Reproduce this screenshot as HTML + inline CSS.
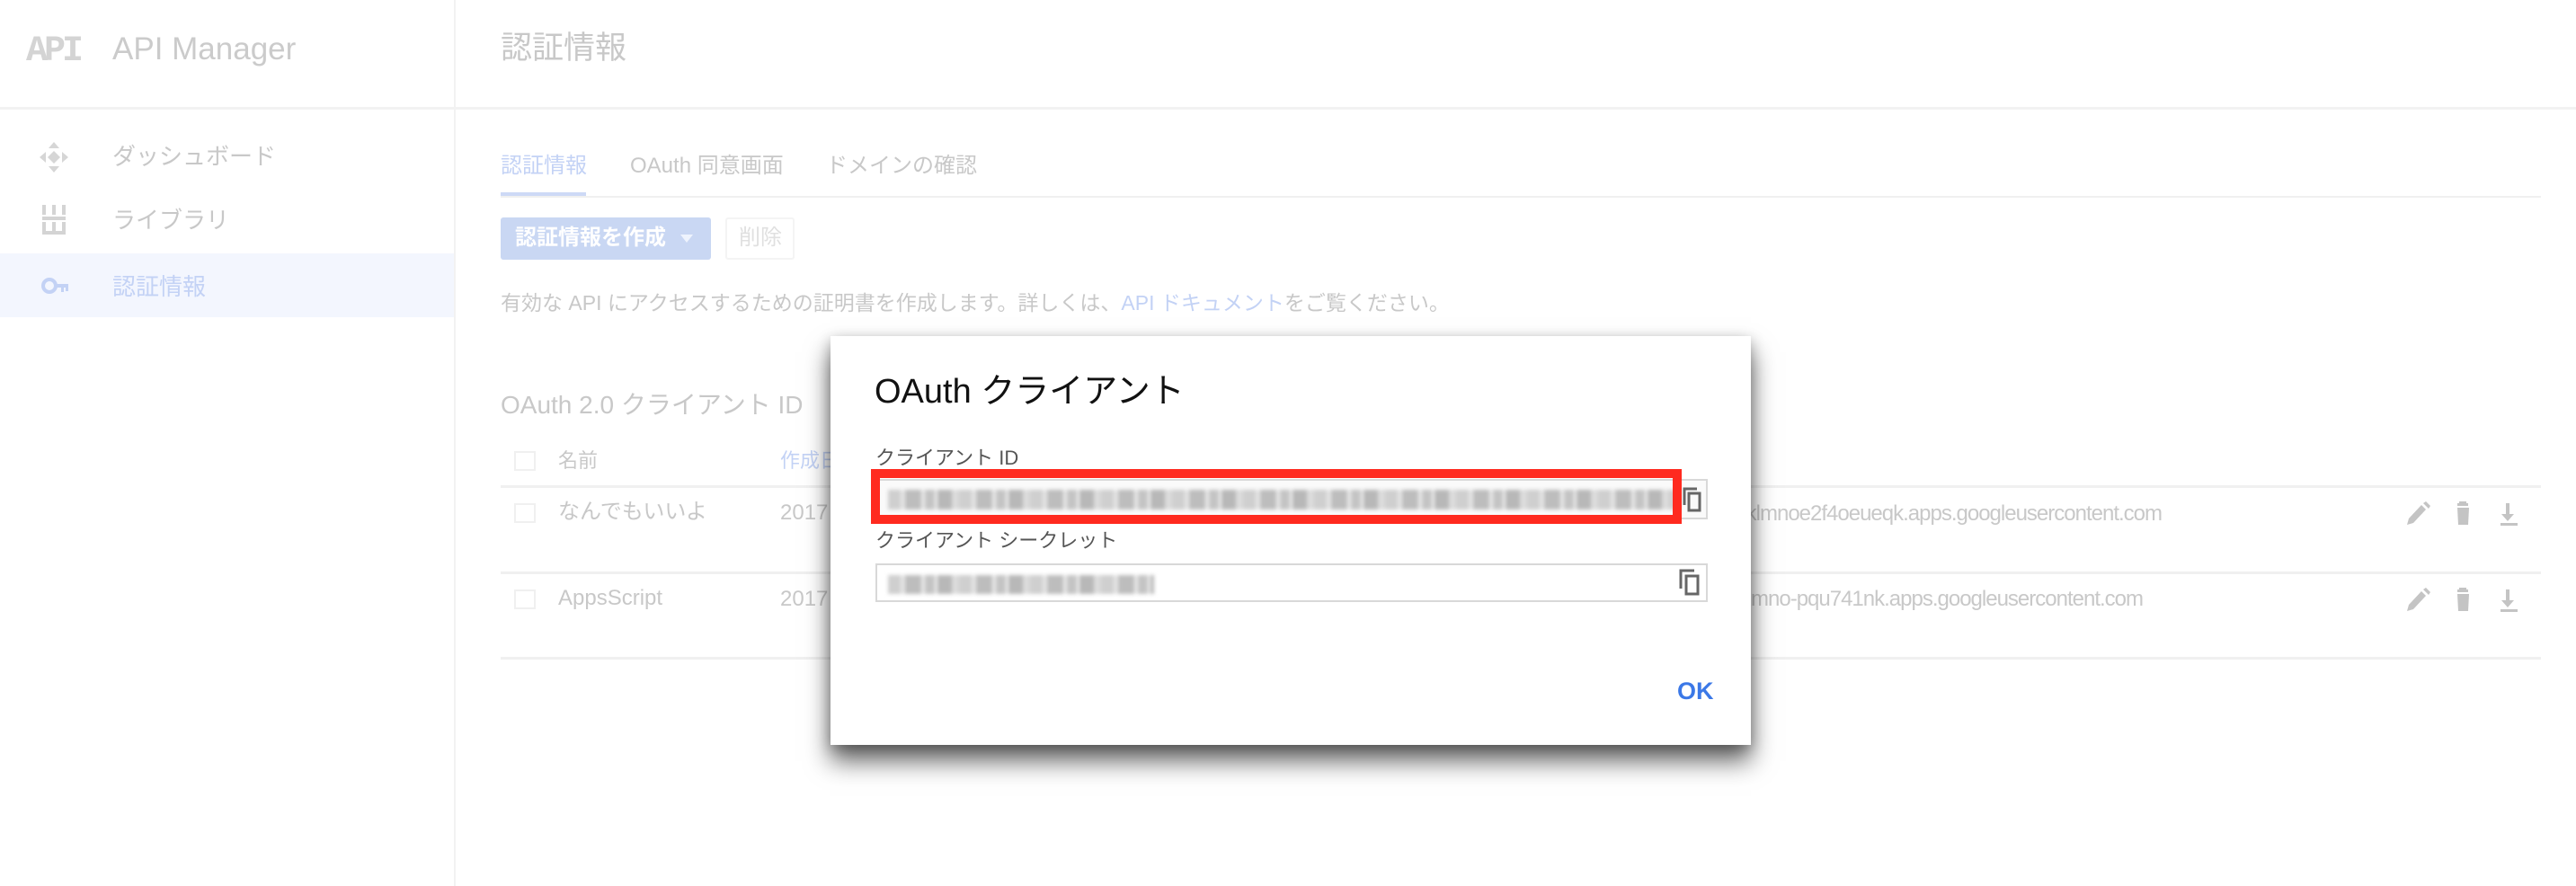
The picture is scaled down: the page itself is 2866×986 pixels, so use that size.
<!DOCTYPE html>
<html><head><meta charset="utf-8">
<style>
*{margin:0;padding:0;box-sizing:border-box}
body{width:2866px;height:986px;background:#fff;position:relative;overflow:hidden;font-family:"Liberation Sans","Noto Sans CJK JP",sans-serif;color:#c8c8c8}
.a{position:absolute;white-space:nowrap;line-height:1}
.hl{position:absolute;background:#f0f0f0;height:3px}
.cb{position:absolute;width:24px;height:22px;border:2px solid #f0f0f0;left:572px}
.blur{position:absolute;filter:blur(2px);background:repeating-linear-gradient(90deg,#cfcfcf 0 14px,#e6e6e6 14px 19px,#bdbdbd 19px 37px,#ececec 37px 41px,#c4c4c4 41px 52px,#f0f0f0 52px 55px,#b8b8b8 55px 71px,#dcdcdc 71px 79px)}
</style></head><body>
<div style="position:absolute;left:0;top:119px;width:2866px;height:3px;background:#f2f2f2"></div>
<div style="position:absolute;left:505px;top:0;width:2px;height:986px;background:#f2f2f2"></div>

<div class="a" style="left:29px;top:38px;font-size:40px;font-weight:bold;font-family:'Liberation Mono',monospace;color:#d4d4d4;letter-spacing:-4px">API</div>
<div class="a" style="left:125px;top:37px;font-size:35px;color:#cbcbcb">API Manager</div>
<div class="a" style="left:557px;top:36px;font-size:35px;color:#c8c8c8">認証情報</div>

<svg class="a" style="left:44px;top:158px" width="32" height="34" viewBox="0 0 32 34"><g fill="#d6d6d6"><path d="M16 0l6 7h-12z"/><path d="M16 34l6-7h-12z"/><path d="M0 17l7-6v12z"/><path d="M32 17l-7-6v12z"/><path d="M16 10l7 7-7 7-7-7z"/></g></svg>
<div class="a" style="left:125px;top:161px;font-size:26px">ダッシュボード</div>
<svg class="a" style="left:47px;top:228px" width="26" height="33" viewBox="0 0 26 33"><g fill="#d4d4d4"><rect x="0" y="0" width="4" height="11"/><rect x="11" y="0" width="4" height="11"/><rect x="22" y="0" width="4" height="11"/><rect x="0" y="13" width="26" height="4"/><rect x="0" y="19" width="4" height="10"/><rect x="11" y="19" width="4" height="10"/><rect x="22" y="19" width="4" height="10"/><rect x="0" y="29" width="26" height="4"/></g></svg>
<div class="a" style="left:125px;top:232px;font-size:26px">ライブラリ</div>
<div style="position:absolute;left:0;top:282px;width:505px;height:71px;background:#f3f6fe"></div>
<svg class="a" style="left:46px;top:307px" width="30" height="22" viewBox="0 0 30 22"><circle cx="9" cy="11" r="7" fill="none" stroke="#c3d2f5" stroke-width="4"/><rect x="15" y="9" width="15" height="4" fill="#c3d2f5"/><rect x="22" y="12" width="3" height="6" fill="#c3d2f5"/><rect x="27" y="12" width="3" height="5" fill="#c3d2f5"/></svg>
<div class="a" style="left:125px;top:306px;font-size:26px;color:#c3d2f5">認証情報</div>

<div class="a" style="left:557px;top:173px;font-size:24px;color:#c3d2f5">認証情報</div>
<div class="a" style="left:701px;top:173px;font-size:24px">OAuth 同意画面</div>
<div class="a" style="left:919px;top:173px;font-size:24px">ドメインの確認</div>
<div class="hl" style="left:557px;top:218px;width:2270px;height:2px"></div>
<div style="position:absolute;left:557px;top:214px;width:95px;height:4px;background:#cdd9f6"></div>

<div style="position:absolute;left:557px;top:242px;width:234px;height:47px;background:#c9d7f3;border-radius:3px"></div>
<div class="a" style="left:573px;top:253px;font-size:24px;font-weight:bold;color:#fff">認証情報を作成</div>
<svg class="a" style="left:757px;top:261px" width="14" height="9"><path d="M0 0h14L7 9z" fill="#eef3fd"/></svg>
<div style="position:absolute;left:807px;top:242px;width:77px;height:47px;border:2px solid #f4f4f4;border-radius:3px"></div>
<div class="a" style="left:822px;top:253px;font-size:24px;color:#e0e0e0">削除</div>

<div class="a" style="left:557px;top:326px;font-size:23px">有効な API にアクセスするための証明書を作成します。詳しくは、<span style="color:#c3d2f5">API ドキュメント</span>をご覧ください。</div>

<div class="a" style="left:557px;top:437px;font-size:28px">OAuth 2.0 クライアント ID</div>

<div class="cb" style="top:502px"></div>
<div class="a" style="left:621px;top:502px;font-size:22px">名前</div>
<div class="a" style="left:868px;top:502px;font-size:22px;color:#c3d2f5">作成日</div>
<div class="hl" style="left:557px;top:540px;width:2270px"></div>
<div class="cb" style="top:560px"></div>
<div class="a" style="left:621px;top:558px;font-size:24px">なんでもいいよ</div>
<div class="a" style="left:868px;top:559px;font-size:24px">2017</div>
<div class="a" style="right:461px;top:560px;font-size:24px;letter-spacing:-1px">1234567890-abcdefghijklmnoe2f4oeueqk.apps.googleusercontent.com</div>
<div class="hl" style="left:557px;top:636px;width:2270px"></div>
<div class="cb" style="top:656px"></div>
<div class="a" style="left:621px;top:654px;font-size:24px">AppsScript</div>
<div class="a" style="left:868px;top:655px;font-size:24px">2017</div>
<div class="a" style="right:482px;top:655px;font-size:24px;letter-spacing:-1px">1234567890-abcdefghijklmno-pqu741nk.apps.googleusercontent.com</div>
<div class="hl" style="left:557px;top:731px;width:2270px"></div>

<svg class="a" style="left:2676px;top:558px" width="140" height="28" viewBox="0 0 140 28"><g fill="#c4c4c4"><path d="M2 26l2-7 14-15 5 5-14 15z"/><path d="M20 2l3-2 5 5-2 3z"/><rect x="58" y="2" width="12" height="3"/><rect x="60" y="0" width="8" height="3"/><path d="M58 7h13l-1 19h-11z"/><path d="M112 2h4v12h5l-7 8-7-8h5z"/><rect x="106" y="24" width="19" height="3"/></g></svg>
<svg class="a" style="left:2676px;top:654px" width="140" height="28" viewBox="0 0 140 28"><g fill="#c4c4c4"><path d="M2 26l2-7 14-15 5 5-14 15z"/><path d="M20 2l3-2 5 5-2 3z"/><rect x="58" y="2" width="12" height="3"/><rect x="60" y="0" width="8" height="3"/><path d="M58 7h13l-1 19h-11z"/><path d="M112 2h4v12h5l-7 8-7-8h5z"/><rect x="106" y="24" width="19" height="3"/></g></svg>

<div style="position:absolute;left:924px;top:374px;width:1024px;height:455px;background:#fff;box-shadow:0 18px 26px rgba(0,0,0,.6),0 4px 14px rgba(0,0,0,.25)"></div>
<div class="a" style="left:973px;top:417px;font-size:38px;color:#111">OAuth クライアント</div>
<div class="a" style="left:974px;top:499px;font-size:22px;color:#555">クライアント ID</div>
<div style="position:absolute;left:974px;top:533px;width:926px;height:45px;border:2px solid #d8d8d8;background:#fafafa"></div>
<div class="blur" style="left:988px;top:545px;width:880px;height:22px"></div>
<div style="position:absolute;left:969px;top:522px;width:902px;height:61px;border:10px solid #ff2a1f"></div>
<svg class="a" style="left:1872px;top:542px" width="22" height="28" viewBox="0 0 22 28"><path d="M2 20V2h14" fill="none" stroke="#666" stroke-width="3"/><rect x="7" y="7" width="12" height="19" fill="none" stroke="#666" stroke-width="3"/></svg>
<div class="a" style="left:974px;top:591px;font-size:22px;color:#555">クライアント シークレット</div>
<div style="position:absolute;left:974px;top:627px;width:926px;height:43px;border:2px solid #d8d8d8"></div>
<div class="blur" style="left:988px;top:640px;width:296px;height:21px"></div>
<svg class="a" style="left:1868px;top:633px" width="24" height="30" viewBox="0 0 24 30"><path d="M2 22V2h15" fill="none" stroke="#666" stroke-width="3"/><rect x="8" y="8" width="13" height="20" fill="none" stroke="#666" stroke-width="3"/></svg>
<div class="a" style="left:1866px;top:756px;font-size:27px;font-weight:bold;color:#3b78e7">OK</div>
</body></html>
